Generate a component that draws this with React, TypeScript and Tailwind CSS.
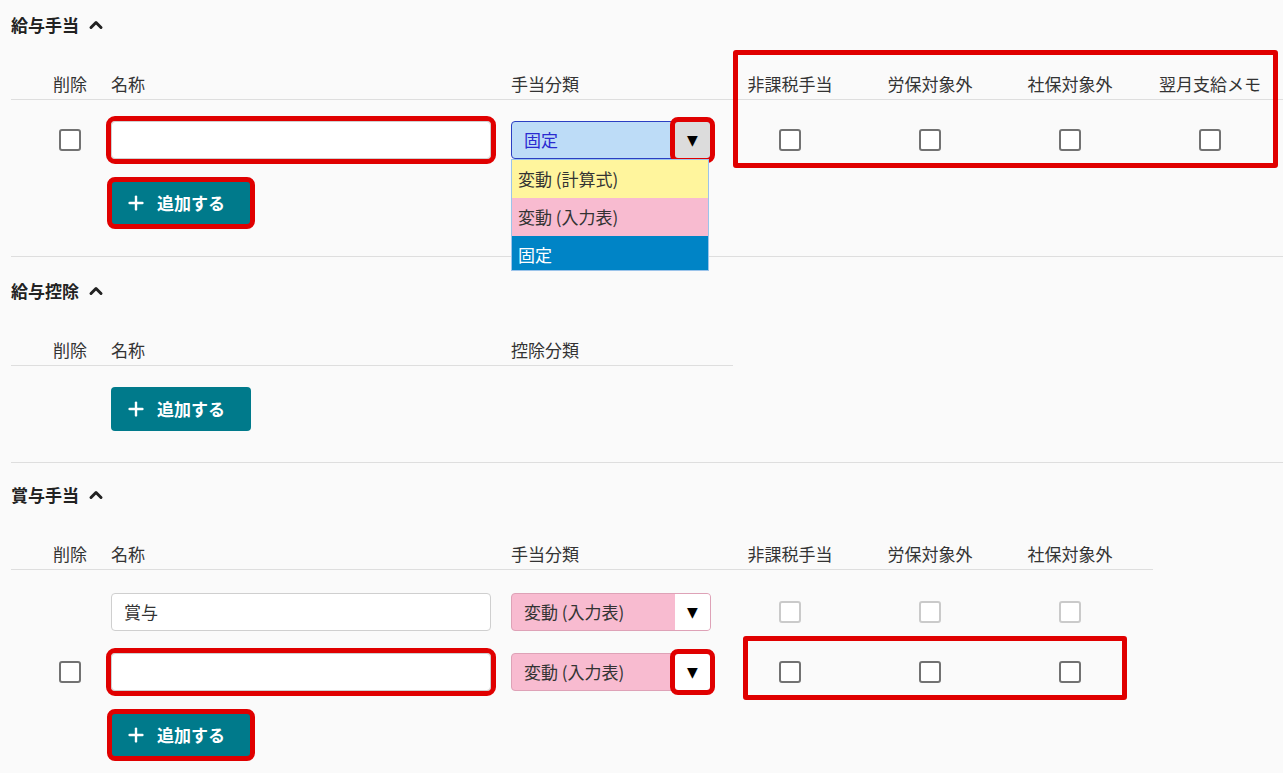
import { ChevronUp, Plus } from "lucide-react";
import clsx from "clsx";

type Tone = "blue" | "pink";

const Box = ({ disabled = false }: { disabled?: boolean }) => (
  <span
    className={clsx(
      "block h-[22px] w-[22px] rounded-[3px] border-2 bg-white",
      disabled ? "border-[#cacaca]" : "border-[#727272]"
    )}
  />
);

const FlagCell = ({ children }: { children: React.ReactNode }) => (
  <div className="flex w-[140px] shrink-0 justify-center pr-[26px]">{children}</div>
);

const Dropdown = () => (
  <div className="absolute left-0 top-[38px] z-10 h-[112px] w-[198px] overflow-hidden border border-[#9cc4ea] bg-white">
    <div className="flex h-[38px] items-center bg-[#fff59d] pl-[6px] text-[#333]">変動 (計算式)</div>
    <div className="flex h-[38px] items-center bg-[#f8bbd0] pl-[6px] text-[#333]">変動 (入力表)</div>
    <div className="flex h-[38px] items-center bg-[#0084c6] pl-[6px] text-white">固定</div>
  </div>
);

const Select = ({
  label,
  tone,
  marked = false,
  open = false,
}: {
  label: string;
  tone: Tone;
  marked?: boolean;
  open?: boolean;
}) => (
  <div className="relative">
    <div
      className={clsx(
        "flex h-[38px] w-[200px] rounded-[4px] border",
        tone === "blue"
          ? "border-[#2b3fc2] bg-[#bddcf7] text-[#2b2bd0]"
          : "border-[#dea2b7] bg-[#f8bbd0] text-[#333]"
      )}
    >
      <span className="flex flex-1 items-center pl-[12px]">{label}</span>
      <span
        className={clsx(
          "flex w-[35px] items-center justify-center font-['DejaVu_Sans',sans-serif] text-[14px] text-black",
          tone === "blue" ? "bg-[#dcdcdc]" : "rounded-r-[3px] bg-white",
          marked && "rounded-[3px] outline-5 outline-[#e00000]"
        )}
      >
        ▼
      </span>
    </div>
    {open && <Dropdown />}
  </div>
);

const NameInput = ({ value = "", marked = false }: { value?: string; marked?: boolean }) => (
  <div
    className={clsx(
      "flex h-[38px] w-[380px] items-center rounded-[4px] border border-[#cfcfcf] bg-white pl-[12px] text-[#333]",
      marked && "outline-5 outline-[#e00000]"
    )}
  >
    {value}
  </div>
);

const AddButton = ({ marked = false }: { marked?: boolean }) => (
  <button
    className={clsx(
      "flex h-[44px] w-[140px] items-center gap-[10px] rounded-[4px] bg-[#007a8b] pl-[14px] font-bold text-white",
      marked && "outline-5 -outline-offset-1 outline-[#e00000]"
    )}
  >
    <Plus className="h-[22px] w-[22px]" strokeWidth={2.6} />
    追加する
  </button>
);

const HeaderRow = ({ category, flags }: { category: string; flags: string[] }) => (
  <div className="flex h-[32px] items-center border-b border-[#dedede] text-[#333]">
    <div className="flex w-[100px] shrink-0 justify-center pl-[18px]">削除</div>
    <div className="w-[400px] shrink-0">名称</div>
    <div className="w-[222px] shrink-0">{category}</div>
    {flags.map((f) => (
      <FlagCell key={f}>
        <span className="whitespace-nowrap">{f}</span>
      </FlagCell>
    ))}
  </div>
);

const Title = ({ text }: { text: string }) => (
  <div className="flex h-[24px] items-center gap-[7px] font-bold text-[#222]">
    {text}
    <ChevronUp className="h-[20px] w-[20px]" strokeWidth={3.6} />
  </div>
);

const salaryFlags = ["非課税手当", "労保対象外", "社保対象外", "翌月支給メモ"];
const bonusFlags = ["非課税手当", "労保対象外", "社保対象外"];

export default function App() {
  return (
    <div className="min-h-screen overflow-hidden bg-[#fafafa] pl-[11px] font-['Noto_Sans_CJK_JP','Noto_Sans',sans-serif] text-[17px]">
      {/* 給与手当 */}
      <section className="w-[1400px] pt-[13px] pb-[31px]">
        <Title text="給与手当" />
        <div className="relative mt-[31px]">
          <HeaderRow category="手当分類" flags={salaryFlags} />
          <div className="pt-[10px]">
            <div className="flex h-[60px] items-center">
              <div className="flex w-[100px] shrink-0 justify-center pl-[18px]">
                <Box />
              </div>
              <div className="w-[400px] shrink-0">
                <NameInput marked />
              </div>
              <div className="w-[222px] shrink-0">
                <Select label="固定" tone="blue" marked open />
              </div>
              {salaryFlags.map((f) => (
                <FlagCell key={f}>
                  <Box />
                </FlagCell>
              ))}
            </div>
          </div>
          <div className="pointer-events-none absolute left-[722px] top-[-18px] h-[118px] w-[545px] rounded-[3px] border-[5px] border-[#e00000]" />
        </div>
        <div className="mt-[11px] pl-[100px]">
          <AddButton marked />
        </div>
      </section>

      {/* 給与控除 */}
      <section className="w-[1400px] border-t border-[#dedede] pt-[22px] pb-[31px]">
        <Title text="給与控除" />
        <div className="mt-[31px] w-[722px]">
          <HeaderRow category="控除分類" flags={[]} />
        </div>
        <div className="mt-[21px] pl-[100px]">
          <AddButton />
        </div>
      </section>

      {/* 賞与手当 */}
      <section className="w-[1400px] border-t border-[#dedede] pt-[20px] pb-[29px]">
        <Title text="賞与手当" />
        <div className="mt-[31px] w-[1142px]">
          <HeaderRow category="手当分類" flags={bonusFlags} />
        </div>
        <div className="pt-[12px]">
          <div className="flex h-[60px] items-center">
            <div className="w-[100px] shrink-0" />
            <div className="w-[400px] shrink-0">
              <NameInput value="賞与" />
            </div>
            <div className="w-[222px] shrink-0">
              <Select label="変動 (入力表)" tone="pink" />
            </div>
            {bonusFlags.map((f) => (
              <FlagCell key={f}>
                <Box disabled />
              </FlagCell>
            ))}
          </div>
          <div className="relative flex h-[60px] items-center">
            <div className="flex w-[100px] shrink-0 justify-center pl-[18px]">
              <Box />
            </div>
            <div className="w-[400px] shrink-0">
              <NameInput marked />
            </div>
            <div className="w-[222px] shrink-0">
              <Select label="変動 (入力表)" tone="pink" marked />
            </div>
            {bonusFlags.map((f) => (
              <FlagCell key={f}>
                <Box />
              </FlagCell>
            ))}
            <div className="pointer-events-none absolute left-[732px] top-[-6px] h-[64px] w-[384px] rounded-[3px] border-[5px] border-[#e00000]" />
          </div>
        </div>
        <div className="mt-[11px] pl-[100px]">
          <AddButton marked />
        </div>
      </section>
    </div>
  );
}
